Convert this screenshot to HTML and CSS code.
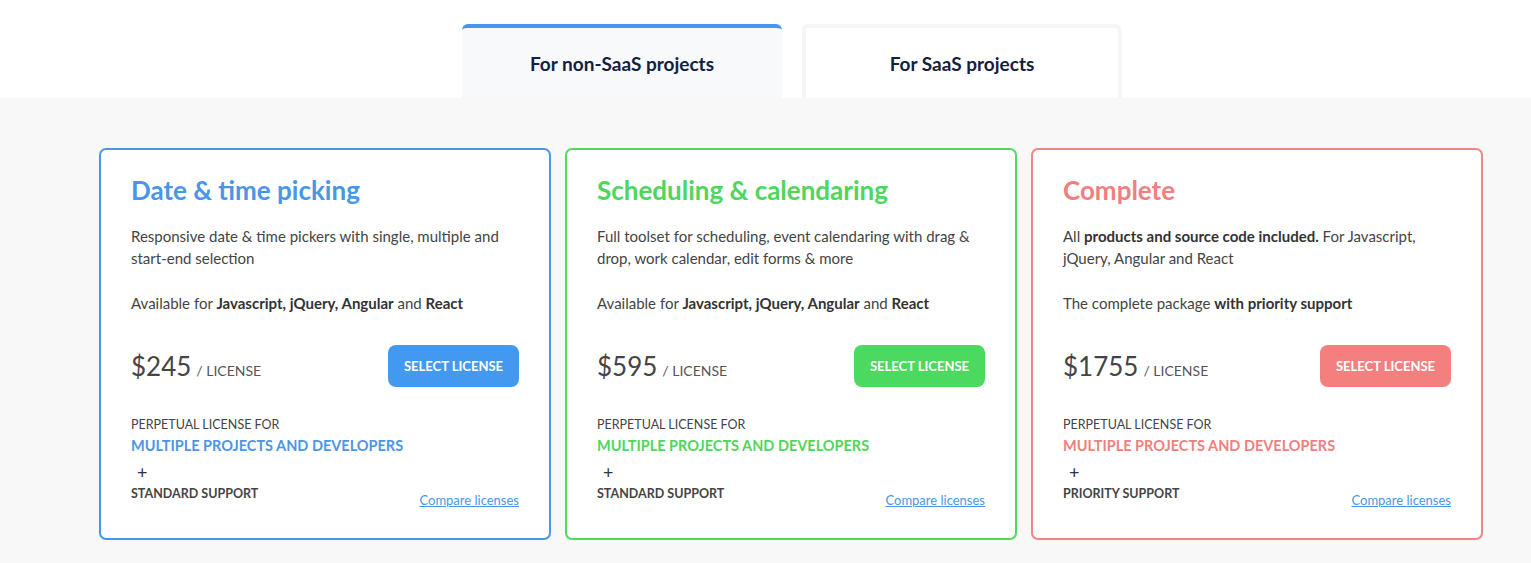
FILE: index.html
```html
<!DOCTYPE html>
<html lang="en">
<head>
<meta charset="utf-8">
<title>Pricing</title>
<link rel="stylesheet" href="styles.css">
</head>
<body>
<div class="top">
  <div class="wrap tabs">
    <div class="tab tab-active">For non-SaaS projects</div>
    <div class="tab tab-idle">For SaaS projects</div>
  </div>
</div>
<div class="main">
  <div class="wrap cards">
    <div class="card card-blue">
      <h2 class="title">Date &amp; time picking</h2>
      <p class="desc">Responsive date &amp; time pickers with single, multiple and start-end selection</p>
      <p class="avail">Available for <b>Javascript, jQuery, Angular</b> and <b>React</b></p>
      <div class="price-row">
        <div class="price"><span class="amount">$245</span><span class="per">/ LICENSE</span></div>
        <a class="btn">SELECT LICENSE</a>
      </div>
      <div class="foot">
        <div class="lic">
          <div class="perp">PERPETUAL LICENSE FOR</div>
          <div class="multi">MULTIPLE PROJECTS AND DEVELOPERS</div>
          <div class="plus">+</div>
          <div class="support">STANDARD SUPPORT</div>
        </div>
        <a class="compare">Compare licenses</a>
      </div>
    </div>
    <div class="card card-green">
      <h2 class="title">Scheduling &amp; calendaring</h2>
      <p class="desc">Full toolset for scheduling, event calendaring with drag &amp; drop, work calendar, edit forms &amp; more</p>
      <p class="avail">Available for <b>Javascript, jQuery, Angular</b> and <b>React</b></p>
      <div class="price-row">
        <div class="price"><span class="amount">$595</span><span class="per">/ LICENSE</span></div>
        <a class="btn">SELECT LICENSE</a>
      </div>
      <div class="foot">
        <div class="lic">
          <div class="perp">PERPETUAL LICENSE FOR</div>
          <div class="multi">MULTIPLE PROJECTS AND DEVELOPERS</div>
          <div class="plus">+</div>
          <div class="support">STANDARD SUPPORT</div>
        </div>
        <a class="compare">Compare licenses</a>
      </div>
    </div>
    <div class="card card-red">
      <h2 class="title">Complete</h2>
      <p class="desc">All <b>products and source code included.</b> For Javascript, jQuery, Angular and React</p>
      <p class="avail">The complete package <b>with priority support</b></p>
      <div class="price-row">
        <div class="price"><span class="amount">$1755</span><span class="per">/ LICENSE</span></div>
        <a class="btn">SELECT LICENSE</a>
      </div>
      <div class="foot">
        <div class="lic">
          <div class="perp">PERPETUAL LICENSE FOR</div>
          <div class="multi">MULTIPLE PROJECTS AND DEVELOPERS</div>
          <div class="plus">+</div>
          <div class="support">PRIORITY SUPPORT</div>
        </div>
        <a class="compare">Compare licenses</a>
      </div>
    </div>
  </div>
</div>
</body>
</html>
```
FILE: styles.css
```css
* { box-sizing: border-box; }
html, body { margin: 0; padding: 0; }
body {
  background: #fff;
  font-family: "Lato", "Open Sans", sans-serif;
  color: #444;
  height: 563px;
  overflow: hidden;
}
.wrap { width: 1384px; margin-left: 99px; }
.top { height: 98px; background: #fff; }
.tabs {
  display: flex;
  justify-content: center;
  gap: 20px;
  padding-top: 24px;
  padding-left: 2px;
  height: 98px;
}
.tab {
  width: 320px;
  height: 74px;
  display: flex;
  align-items: center;
  justify-content: center;
  font-size: 19px;
  font-weight: 700;
  color: #14213d;
  padding-bottom: 0;
  border-radius: 6px 6px 0 0;
}
.tab-active {
  background: #f8f9fa;
  border-top: 4px solid #4597ee;
}
.tab-idle {
  background: #fff;
  border: 4px solid #f6f6f6;
  border-bottom: 0;
}
.main {
  background: #f8f8f8;
  height: 465px;
  padding-top: 50px;
}
.cards { display: flex; gap: 14px; }
.card {
  width: 452px;
  height: 392px;
  background: #fff;
  border: 2px solid;
  border-radius: 7px;
  padding: 24px 30px 0 30px;
}
.card-blue { border-color: #4a97e8; --c: #4a96e6; --b: #4399f0; }
.card-green { border-color: #55d85e; --c: #4fd65c; --b: #4cd95f; }
.card-red { border-color: #f08585; --c: #f07f7f; --b: #f47f7f; }
.title {
  margin: 0;
  font-size: 26px;
  line-height: 32px;
  font-weight: 700;
  color: var(--c);
}
.desc {
  margin: 19px 0 0;
  font-size: 15px;
  line-height: 22px;
}
.avail {
  margin: 23px 0 0;
  font-size: 15px;
  line-height: 22px;
}
.desc b, .avail b { font-weight: 700; color: #333; }
.price-row {
  margin-top: 31px;
  display: flex;
  justify-content: space-between;
  align-items: center;
  height: 42px;
}
.amount { font-size: 26px; color: #444; }
.per { font-size: 14px; color: #555; margin-left: 5px; }
.btn {
  width: 131px;
  height: 42px;
  border-radius: 8px;
  background: var(--b);
  color: #fff;
  font-size: 13px;
  font-weight: 700;
  display: flex;
  align-items: center;
  justify-content: center;
}
.foot {
  margin-top: 28px;
  display: flex;
  justify-content: space-between;
  align-items: flex-end;
}
.lic { padding-bottom: 7px; }
.perp { font-size: 12.5px; line-height: 20px; color: #444; }
.multi { font-size: 14.5px; line-height: 22px; font-weight: 700; color: var(--c); }
.plus { font-size: 18px; line-height: 22px; margin: 4px 0 0 6px; color: #333; }
.support { font-size: 12.5px; line-height: 20px; font-weight: 700; color: #444; margin-top: 1px; }
.compare {
  font-size: 13px;
  line-height: 20px;
  color: #4a96e6;
  text-decoration: underline;
  margin-bottom: 1px;
}
```
